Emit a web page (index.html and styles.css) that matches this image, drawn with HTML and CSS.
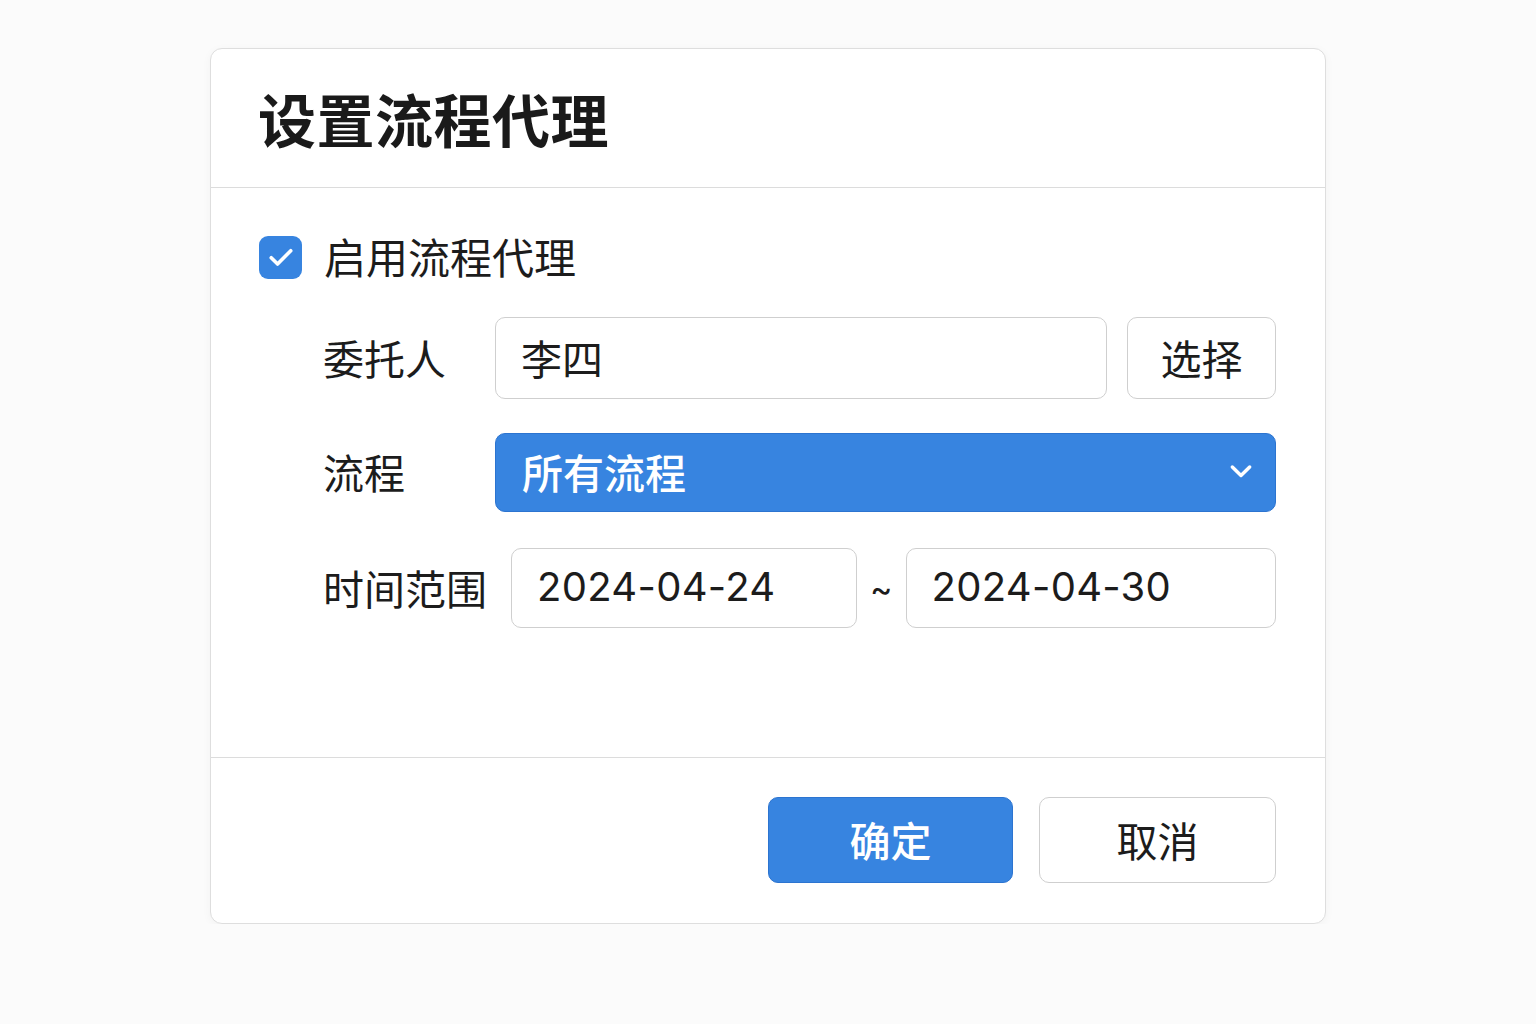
FILE: index.html
```html
<!DOCTYPE html>
<html lang="zh-CN">
  <head>
    <meta charset="utf-8" />
    <title>设置流程代理</title>
    <link rel="stylesheet" href="styles.css" />
  </head>
  <body>
    <div class="dialog">
      <header class="dialog-header">
        <h1 class="dialog-title">设置流程代理</h1>
      </header>

      <section class="dialog-body">
        <label class="enable-row">
          <span class="checkbox">
            <svg viewBox="0 0 24 24" width="36" height="36">
              <path d="M5.5 12.5l4.2 4.2L18.5 7.8" fill="none" stroke="#fff" stroke-width="2.4" stroke-linecap="round" stroke-linejoin="round" />
            </svg>
          </span>
          <span class="enable-text">启用流程代理</span>
        </label>

        <div class="form-row">
          <span class="form-label">委托人</span>
          <div class="text-input grow">李四</div>
          <button type="button" class="btn btn-select">选择</button>
        </div>

        <div class="form-row">
          <span class="form-label">流程</span>
          <div class="select-box grow">
            <span>所有流程</span>
            <svg viewBox="0 0 24 24" width="32" height="32">
              <path d="M5.5 9l6.5 6.3L18.5 9" fill="none" stroke="#fff" stroke-width="2.6" stroke-linecap="round" stroke-linejoin="round" />
            </svg>
          </div>
        </div>

        <div class="form-row date-row">
          <span class="form-label">时间范围</span>
          <div class="text-input date-input date-start">2024-04-24</div>
          <span class="range-sep">~</span>
          <div class="text-input date-input grow">2024-04-30</div>
        </div>
      </section>

      <footer class="dialog-footer">
        <button type="button" class="btn btn-primary">确定</button>
        <button type="button" class="btn btn-cancel">取消</button>
      </footer>
    </div>
  </body>
</html>
```

FILE: styles.css
```css
body {
  margin: 0;
  padding: 48px 0 0;
  background-color: #fbfbfb;
  font-family: Inter, "Noto Sans CJK SC", sans-serif;
  color: #1c1c1c;
}

.dialog {
  width: 1116px;
  margin: 0 auto;
  box-sizing: border-box;
  background-color: #fff;
  border: 1px solid #dedede;
  border-radius: 12px;
  box-shadow: 0 2px 10px rgba(0, 0, 0, 0.04);
}

.dialog-header {
  height: 138px;
  display: flex;
  align-items: center;
  padding: 0 49px;
  border-bottom: 1px solid #dcdcdc;
}

.dialog-title {
  margin: 0 0 0 -2px;
  font-family: "Noto Sans CJK SC", sans-serif;
  font-size: 58px;
  font-weight: 700;
  color: #1a1a1a;
  letter-spacing: 0.5px;
}

.dialog-body {
  padding: 47px 49px 129px 48px;
  display: flex;
  flex-direction: column;
  gap: 34px;
}

.enable-row {
  display: flex;
  align-items: center;
  gap: 22px;
  height: 44px;
  margin-bottom: 4px;
}

.enable-text {
  font-size: 42px;
  margin-top: -4px;
}

.checkbox {
  width: 43px;
  height: 43px;
  border-radius: 9px;
  background-color: #3784e0;
  display: flex;
  align-items: center;
  justify-content: center;
}

.enable-text,
.form-label,
.text-input,
.btn {
  font-family: "Noto Sans CJK SC", sans-serif;
}

.form-label,
.text-input,
.btn {
  font-size: 41px;
}

.form-label,
.text-input {
  padding-bottom: 3px;
}

.form-row {
  display: flex;
  align-items: center;
  gap: 22px;
  padding-left: 64px;
}

.date-row {
  margin-top: 2px;
}

.form-label {
  min-width: 150px;
  white-space: nowrap;
}

.grow {
  flex: 1;
}

.text-input {
  box-sizing: border-box;
  height: 82px;
  padding-left: 25px;
  padding-right: 25px;
  display: flex;
  align-items: center;
  border: 1.5px solid #cfcfcf;
  border-radius: 10px;
  background: #fff;
}

.date-input {
  font-family: Inter, sans-serif;
  font-size: 40px;
  height: 80px;
  letter-spacing: 0.3px;
}

.date-start {
  width: 346px;
  flex: none;
  margin-left: 2px;
}

.range-sep {
  font-size: 34px;
  margin: 0 -9px;
}

.select-box {
  box-sizing: border-box;
  height: 79px;
  padding: 0 18px 3px 26px;
  display: flex;
  align-items: center;
  justify-content: space-between;
  background-color: #3784e0;
  border: 1px solid #2c74d0;
  border-radius: 10px;
  color: #fff;
  font-family: "Noto Sans CJK SC", sans-serif;
  font-size: 41px;
  font-weight: 500;
}

.btn {
  box-sizing: border-box;
  border-radius: 10px;
  cursor: pointer;
  color: #1c1c1c;
  background: #fff;
  border: 1.5px solid #cfcfcf;
  padding-bottom: 4px;
}

.btn-select {
  width: 149px;
  height: 82px;
  margin-left: -2px;
}

.dialog-footer {
  display: flex;
  justify-content: flex-end;
  gap: 26px;
  padding: 39px 49px 40px;
  border-top: 1px solid #dcdcdc;
}

.btn-primary {
  width: 245px;
  height: 86px;
  background-color: #3784e0;
  border: 1px solid #2c74d0;
  color: #fff;
  font-weight: 500;
}

.btn-cancel {
  width: 237px;
  height: 86px;
}
```
